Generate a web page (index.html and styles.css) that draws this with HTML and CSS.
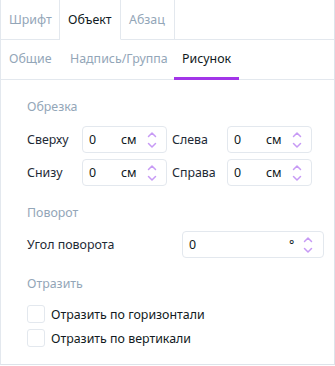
FILE: index.html
```html
<!DOCTYPE html>
<html lang="ru">
<head>
<meta charset="utf-8">
<link rel="stylesheet" href="styles.css">
</head>
<body>
<div class="panel">
  <div class="tabs">
    <div class="tab t1">Шрифт</div>
    <div class="tab t2 active">Объект</div>
    <div class="tab t3">Абзац</div>
    <div class="tab-fill"></div>
  </div>
  <div class="subtabs">
    <div class="subtab st1">Общие</div>
    <div class="subtab st2">Надпись/Группа</div>
    <div class="subtab st3 active">Рисунок</div>
  </div>
  <div class="content">
    <div class="heading">Обрезка</div>
    <div class="crop-grid">
      <div class="label">Сверху</div>
      <div class="field"><span class="val">0</span><span class="unit">см</span><span class="spin"><svg width="10" height="20" viewBox="0 0 10 20"><path d="M1.5 6.5 L5 3 L8.5 6.5" /><path d="M1.5 13.5 L5 17 L8.5 13.5" /></svg></span></div>
      <div class="label label2">Слева</div>
      <div class="field"><span class="val">0</span><span class="unit">см</span><span class="spin"><svg width="10" height="20" viewBox="0 0 10 20"><path d="M1.5 6.5 L5 3 L8.5 6.5" /><path d="M1.5 13.5 L5 17 L8.5 13.5" /></svg></span></div>
      <div class="label">Снизу</div>
      <div class="field"><span class="val">0</span><span class="unit">см</span><span class="spin"><svg width="10" height="20" viewBox="0 0 10 20"><path d="M1.5 6.5 L5 3 L8.5 6.5" /><path d="M1.5 13.5 L5 17 L8.5 13.5" /></svg></span></div>
      <div class="label label2">Справа</div>
      <div class="field"><span class="val">0</span><span class="unit">см</span><span class="spin"><svg width="10" height="20" viewBox="0 0 10 20"><path d="M1.5 6.5 L5 3 L8.5 6.5" /><path d="M1.5 13.5 L5 17 L8.5 13.5" /></svg></span></div>
    </div>
    <div class="heading h2">Поворот</div>
    <div class="rot-row">
      <div class="label">Угол поворота</div>
      <div class="field wide"><span class="val">0</span><span class="unit deg">°</span><span class="spin"><svg width="10" height="20" viewBox="0 0 10 20"><path d="M1.5 6.5 L5 3 L8.5 6.5" /><path d="M1.5 13.5 L5 17 L8.5 13.5" /></svg></span></div>
    </div>
    <div class="heading h3">Отразить</div>
    <div class="checks">
      <label class="check"><span class="box"></span><span>Отразить по горизонтали</span></label>
      <label class="check"><span class="box"></span><span>Отразить по вертикали</span></label>
    </div>
  </div>
</div>
</body>
</html>
```
FILE: styles.css
```css
html, body {
  margin: 0;
  padding: 0;
  background: #ffffff;
}
body {
  font-family: "Noto Sans", "Open Sans", sans-serif;
  font-size: 12.4px;
  color: #1e2a36;
}
.panel {
  width: 335px;
  height: 365px;
  box-sizing: border-box;
  border-left: 1px solid #e3e8ee;
  border-right: 1px solid #dde3ea;
  border-bottom: 1px solid #dde3ea;
  display: flex;
  flex-direction: column;
}
.tabs {
  display: flex;
  height: 40px;
  flex: none;
}
.tab {
  height: 40px;
  box-sizing: border-box;
  padding: 0 0 0 8px;
  line-height: 40px;
  color: #93a6b8;
  border-right: 1px solid #e3e8ee;
  border-bottom: 1px solid #e3e8ee;
  white-space: nowrap;
}
.t1 { width: 59px; }
.t2 { width: 61px; }
.t3 { width: 54px; }
.tab.active {
  color: #111a22;
  border-bottom-color: transparent;
}
.tab-fill {
  flex: 1;
  border-bottom: 1px solid #e3e8ee;
}
.subtabs {
  display: flex;
  height: 40px;
  box-sizing: border-box;
  border-bottom: 1px solid #e3e8ee;
  flex: none;
}
.subtab {
  position: relative;
  box-sizing: border-box;
  padding-left: 8px;
  line-height: 37px;
  color: #93a6b8;
  white-space: nowrap;
}
.st1 { width: 60px; }
.st2 { width: 113px; padding-left: 9px; }
.st3 { width: 65px; }
.subtab.active { color: #111a22; }
.subtab.active::after {
  content: "";
  position: absolute;
  left: 0;
  right: 0;
  bottom: -1px;
  height: 3px;
  background: #a235e8;
}
.content {
  padding: 17px 0 0 26px;
}
.heading {
  color: #93a6b8;
  line-height: 20px;
  height: 20px;
}
.crop-grid {
  margin-top: 9px;
  display: grid;
  grid-template-columns: 55px 85px 60px 85px;
  grid-auto-rows: 27px;
  row-gap: 6px;
  align-items: center;
}
.label {
  line-height: 20px;
  white-space: nowrap;
}
.label2 { padding-left: 5px; }
.field {
  height: 27px;
  box-sizing: border-box;
  border: 1px solid #e3e8ee;
  border-radius: 4px;
  display: flex;
  align-items: center;
  padding-left: 6px;
  color: #111a22;
}
.val { flex: 1; }
.unit { width: 26px; }
.spin {
  width: 10px;
  height: 20px;
  margin-right: 9px;
  display: flex;
}
.spin svg path {
  fill: none;
  stroke: #c79af5;
  stroke-width: 1.5;
  stroke-linecap: round;
  stroke-linejoin: round;
}
.h2 { margin-top: 17px; }
.rot-row {
  margin-top: 8px;
  display: flex;
  align-items: center;
}
.rot-row .label { width: 155px; }
.field.wide { width: 142px; }
.unit.deg { width: 14px; }
.wide .spin { margin-right: 10px; }
.h3 { margin-top: 16px; }
.checks {
  margin-top: 11px;
  display: flex;
  flex-direction: column;
  gap: 6px;
}
.check {
  display: flex;
  align-items: center;
  gap: 6px;
  height: 18px;
  color: #111a22;
}
.box {
  width: 18px;
  height: 18px;
  box-sizing: border-box;
  border: 1px solid #e3e8ee;
  border-radius: 3px;
}
```
